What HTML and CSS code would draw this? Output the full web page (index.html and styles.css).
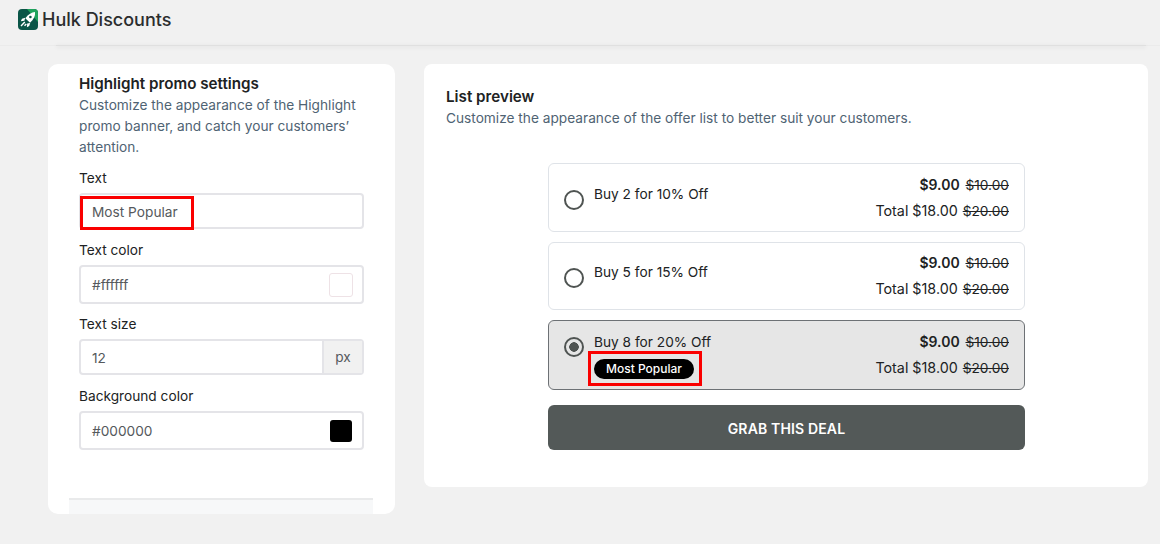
FILE: index.html
```html
<!DOCTYPE html>
<html lang="en">
<head>
  <meta charset="UTF-8" />
  <meta name="viewport" content="width=device-width, initial-scale=1.0" />
  <title>Hulk Discounts</title>
  <link rel="stylesheet" href="styles.css">
</head>
<body>
  <header class="topbar">
    <svg class="logo" width="20" height="21" viewBox="0 0 20 21">
      <rect width="20" height="21" rx="4" fill="#0a5547" />
      <path d="M9 0h7a4 4 0 0 1 4 4v9z" fill="#1fa35c" />
      <path d="M17 3c.5 4-1.200 7.300-5 10.700L7.300 9.200C10.500 5.200 13.500 3.400 17 3z" fill="#fff" />
      <path d="M7.200 8.800 4 9.800l-1.200 2.400 3.600-.4zM12.200 14l-1 3-2.300 1.200.3-3.600z" fill="#fff" />
      <path d="M6.800 13 3 17M8.300 15l-1.800 1.800" stroke="#fff" stroke-width="1.400" />
      <circle cx="12.400" cy="8" r="1.300" fill="#0a5547" />
    </svg>
    <span class="app-name">Hulk Discounts</span>
  </header>
  <div class="topbar-shadow"></div>

  <main class="page">
    <!-- Settings column -->
    <section class="settings-card">
      <div class="settings-body">
        <h2>Highlight promo settings</h2>
        <p class="hint">Customize the appearance of the Highlight promo banner, and catch your customers’ attention.</p>

        <div class="field field-first">
          <label>Text</label>
          <div class="input input-low">Most Popular</div>
          <div class="mark mark-input"></div>
        </div>
        <div class="field">
          <label>Text color</label>
          <div class="input input-tall">#ffffff<span class="swatch swatch-white"></span></div>
        </div>
        <div class="field field-size">
          <label>Text size</label>
          <div class="input input-size">
            <span class="size-value">12</span>
            <span class="unit">px</span>
          </div>
        </div>
        <div class="field">
          <label>Background color</label>
          <div class="input input-tall">#000000<span class="swatch swatch-black"></span></div>
        </div>
      </div>
      <div class="settings-foot"></div>
    </section>

    <!-- Preview column -->
    <section class="preview-card">
      <h2>List preview</h2>
      <p class="hint">Customize the appearance of the offer list to better suit your customers.</p>

      <div class="offers">
        <div class="offer">
          <span class="radio"></span>
          <div class="offer-title">Buy 2 for 10% Off</div>
          <div class="prices">
            <div><b>$9.00</b> <s>$10.00</s></div>
            <div class="total">Total $18.00 <s>$20.00</s></div>
          </div>
        </div>
        <div class="offer offer-short">
          <span class="radio"></span>
          <div class="offer-title">Buy 5 for 15% Off</div>
          <div class="prices">
            <div><b>$9.00</b> <s>$10.00</s></div>
            <div class="total">Total $18.00 <s>$20.00</s></div>
          </div>
        </div>
        <div class="offer offer-selected">
          <span class="radio radio-on"></span>
          <div class="offer-title">
            Buy 8 for 20% Off
            <span class="badge">Most Popular</span>
            <div class="mark mark-badge"></div>
          </div>
          <div class="prices">
            <div><b>$9.00</b> <s>$10.00</s></div>
            <div class="total">Total $18.00 <s>$20.00</s></div>
          </div>
        </div>
        <button class="deal-btn">GRAB THIS DEAL</button>
      </div>
    </section>
  </main>
</body>
</html>
```

FILE: styles.css
```css
* {
  box-sizing: border-box;
}
html, body {
  height: 100%;
}
body {
  margin: 0;
  background-color: #f1f1f1;
  color: #202223;
  font-family: Inter, "Liberation Sans", sans-serif;
  font-size: 13.7px;
  overflow: hidden;
}
.topbar {
  display: flex;
  align-items: center;
  height: 46px;
  padding: 0 0 7px 18px;
  gap: 4px;
  border-bottom: 1px solid #ebebeb;
}
.logo {
  flex: none;
}
.app-name {
  font-size: 18px;
  font-weight: 500;
  color: #2b2d2e;
}
.topbar-shadow {
  height: 1px;
  margin: -1px 14px 0 56px;
  background: #e0e0e0;
  box-shadow: 0 1px 4px rgba(0, 0, 0, 0.14);
}
.page {
  display: flex;
  align-items: flex-start;
  gap: 29px;
  padding: 18px 12px 0 48px;
}
h2 {
  margin: 0;
  font-size: 15.2px;
  font-weight: 600;
  line-height: 21px;
  color: #202223;
}
.hint {
  margin: 0;
  color: #4f6373;
  line-height: 21px;
}

/* Settings card */
.settings-card {
  flex: none;
  width: 347px;
  height: 450px;
  display: flex;
  flex-direction: column;
  background: #fff;
  border-radius: 10px;
  overflow: hidden;
}
.settings-body {
  flex: 1;
  padding: 9px 31px 0;
}
.settings-body .hint {
  margin-top: 1px;
}
.settings-foot {
  height: 16px;
  margin: 0 22px 0 21px;
  background: #f7f8f9;
  border-top: 2px solid #e9eaeb;
}
.field {
  position: relative;
  margin-top: 11px;
}
.field-first {
  margin-top: 10px;
}
.field-size {
  margin-top: 10px;
}
.field label {
  display: block;
  line-height: 21px;
  margin-bottom: 4px;
}
.input {
  display: flex;
  align-items: center;
  justify-content: space-between;
  height: 36px;
  padding: 0 9px 0 11px;
  background: #fff;
  border: 2px solid #e4e4e8;
  border-radius: 4px;
  color: #55595c;
}
.input-low {
  padding-top: 2px;
}
.input-tall {
  height: 39px;
}
.input-size {
  padding: 0;
}
.size-value {
  padding: 2px 0 0 11px;
}
.unit {
  display: flex;
  align-items: center;
  justify-content: center;
  width: 40px;
  height: 100%;
  background: #f1f1f1;
  border-left: 2px solid #e4e4e8;
}
.swatch {
  border-radius: 3px;
}
.swatch-white {
  width: 24px;
  height: 24px;
  background: #fff;
  border: 1px solid #eee2e6;
}
.swatch-black {
  width: 22px;
  height: 22px;
  margin-right: 1px;
  background: #000;
}

/* Red annotation boxes */
.mark {
  position: absolute;
  border: 3px solid #fa0000;
  pointer-events: none;
}
.mark-input {
  left: 1px;
  bottom: -1px;
  width: 114px;
  height: 34px;
}
.mark-badge {
  left: -6px;
  top: 22px;
  width: 114px;
  height: 35px;
}

/* Preview card */
.preview-card {
  flex: 1;
  height: 423px;
  padding: 22px 22px 0;
  background: #fff;
  border-radius: 8px;
}
.preview-card h2 {
  line-height: 22px;
}
.offers {
  display: flex;
  flex-direction: column;
  gap: 10px;
  width: 477px;
  margin: 34px auto 0 102px;
}
.offer {
  display: flex;
  align-items: flex-start;
  height: 69px;
  padding: 8px 15px 0 15px;
  border: 1px solid #dfe3e8;
  border-radius: 6px;
  background: #fff;
}
.offer-short {
  height: 68px;
  padding-top: 7px;
}
.offer-selected {
  height: 70px;
  background: #e6e6e6;
  border-color: #6d7175;
}
.radio {
  flex: none;
  width: 20px;
  height: 20px;
  margin-top: 18px;
  margin-right: 10px;
  border: 2px solid #4f5452;
  border-radius: 50%;
}
.radio-on {
  margin-top: 8px;
  background: radial-gradient(circle, #4f5452 0 4.500px, transparent 5px);
}
.offer-title {
  position: relative;
  flex: 1;
  padding-top: 12px;
  line-height: 20px;
}
.offer-selected .offer-title {
  padding-top: 3px;
}
.badge {
  display: block;
  width: 100px;
  height: 20px;
  margin-top: 7px;
  background: #000;
  border-radius: 10px;
  color: #fff;
  font-size: 12px;
  font-weight: 500;
  line-height: 20px;
  text-align: center;
}
.prices {
  text-align: right;
  line-height: 26px;
  white-space: nowrap;
}
.prices s {
  margin-left: 2px;
  font-size: 13.7px;
}
.prices b {
  font-size: 14px;
  font-weight: 600;
}
.total {
  font-size: 14.3px;
}
.total s {
  margin-left: 1px;
}
.deal-btn {
  height: 45px;
  margin-top: 5px;
  padding-top: 2px;
  background: #535958;
  border: none;
  border-radius: 6px;
  color: #fff;
  font-family: inherit;
  font-size: 14px;
  font-weight: 600;
  letter-spacing: 0.15px;
}
```
